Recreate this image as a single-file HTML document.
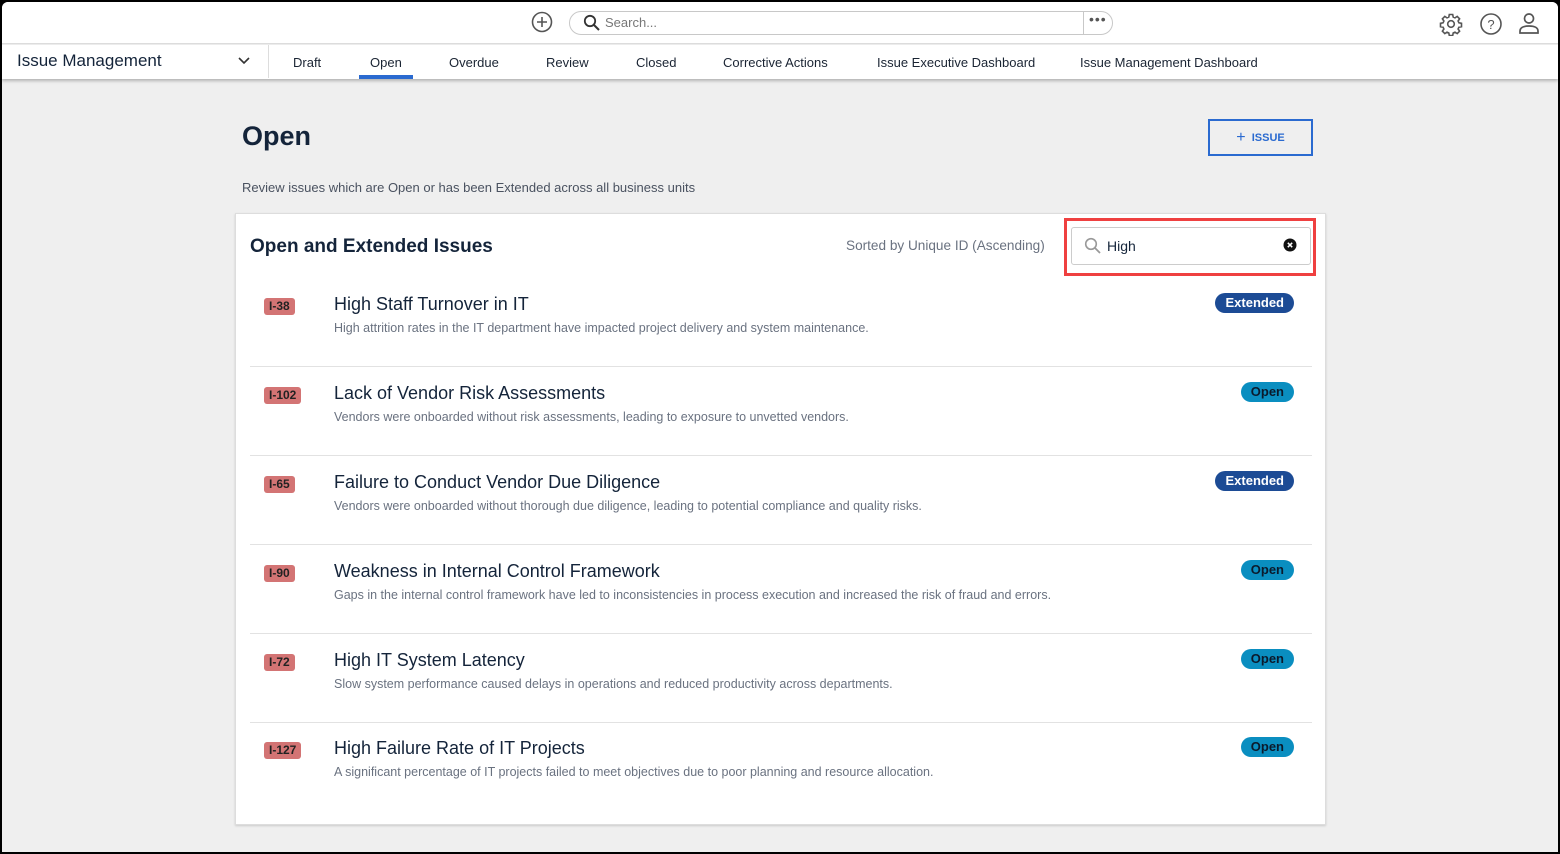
<!DOCTYPE html>
<html><head><meta charset="utf-8"><style>
*{box-sizing:border-box;margin:0;padding:0}
body{width:1560px;height:854px;background:#000;font-family:"Liberation Sans",sans-serif;overflow:hidden}
#app{position:absolute;left:2px;top:2px;width:1556px;height:850px;background:#efefef;border-radius:6px 6px 0 0;overflow:hidden}
#top{position:absolute;left:0;top:0;width:100%;height:42px;background:#fff;border-bottom:1px solid #dcdcdc}
#nav{position:absolute;left:0;top:43px;width:100%;height:34px;background:#fff;box-shadow:0 2px 3px rgba(0,0,0,.25)}
.t{position:absolute;white-space:nowrap}
.navi{position:absolute;top:10px;font-size:13px;color:#1a2433}
#card{position:absolute;left:233px;top:211px;width:1091px;height:612px;background:#fff;border:1px solid #ddd;box-shadow:0 1px 2px rgba(0,0,0,.15)}
.row{position:absolute;left:14px;width:1062px;height:89px}
.sep{border-bottom:1px solid #e2e2e2}
.id{position:absolute;left:14px;top:20px;height:17px;padding:0 5px;background:#d37474;border-radius:3px;font-size:12px;font-weight:bold;color:#222;line-height:17px}
.tt{position:absolute;left:84px;top:16px;font-size:18px;color:#14243a}
.ds{position:absolute;left:84px;top:43px;font-size:12.5px;color:#6a7280}
.bd{position:absolute;right:18px;top:15px;height:20px;border-radius:10px;padding:0 10px;font-size:13px;font-weight:bold;line-height:20px}
.ex{background:#1c4b95;color:#fff}
.op{background:#0a8ec0;color:#0b1a2c}
</style></head><body><div id="app">
<div id="top">
 <svg class="t" style="left:529px;top:9px" width="22" height="22" viewBox="0 0 22 22"><circle cx="11" cy="11" r="9.5" fill="none" stroke="#555" stroke-width="1.6"/><path d="M11 6v10M6 11h10" stroke="#555" stroke-width="1.6"/></svg>
 <div class="t" style="left:567px;top:9px;width:544px;height:24px;border:1px solid #c8c8c8;border-radius:12px"></div>
 <div class="t" style="left:1081px;top:10px;width:1px;height:22px;background:#c8c8c8"></div>
 <svg class="t" style="left:581px;top:12px" width="18" height="18" viewBox="0 0 18 18"><circle cx="7" cy="7" r="5.2" fill="none" stroke="#333" stroke-width="1.8"/><path d="M11 11l5 5" stroke="#333" stroke-width="2"/></svg>
 <div class="t" style="left:603px;top:13px;font-size:13px;color:#777">Search...</div>
 <div class="t" style="left:1087px;top:9px;font-size:14px;color:#555;letter-spacing:1px">•••</div>
 <svg class="t" style="left:1437px;top:10px" width="24" height="24" viewBox="0 0 24 24" fill="none" stroke="#555" stroke-width="1.6"><path d="M10.3 2.5h3.4l.5 2.6 1.8.8 2.2-1.5 2.4 2.4-1.5 2.2.8 1.8 2.6.5v3.4l-2.6.5-.8 1.8 1.5 2.2-2.4 2.4-2.2-1.5-1.8.8-.5 2.6h-3.4l-.5-2.6-1.8-.8-2.2 1.5-2.4-2.4 1.5-2.2-.8-1.8-2.6-.5v-3.4l2.6-.5.8-1.8-1.5-2.2 2.4-2.4 2.2 1.5 1.8-.8z"/><circle cx="12" cy="12" r="3.3"/></svg>
 <svg class="t" style="left:1477px;top:10px" width="24" height="24" viewBox="0 0 24 24"><circle cx="12" cy="12" r="10" fill="none" stroke="#555" stroke-width="1.6"/><text x="12" y="17" text-anchor="middle" font-size="13" font-family="Liberation Sans" fill="#555">?</text></svg>
 <svg class="t" style="left:1515px;top:9px" width="24" height="24" viewBox="0 0 24 24" fill="none" stroke="#555" stroke-width="1.7"><circle cx="12" cy="7.5" r="4.5"/><path d="M3 22v-2c0-3 3-5 9-5s9 2 9 5v2z"/></svg>
</div>
<div id="nav">
 <div class="t" style="left:15px;top:6px;font-size:17px;color:#14243a">Issue Management</div>
 <svg class="t" style="left:235px;top:11px" width="14" height="10" viewBox="0 0 14 10"><path d="M2 2l5 5 5-5" fill="none" stroke="#333" stroke-width="1.6"/></svg>
 <div class="t" style="left:266px;top:0;width:1px;height:33px;background:#ddd"></div>
 <div class="navi" style="left:291px">Draft</div>
 <div class="navi" style="left:368px">Open</div>
 <div class="t" style="left:357px;top:30px;width:54px;height:4px;background:#2a6ad0"></div>
 <div class="navi" style="left:447px">Overdue</div>
 <div class="navi" style="left:544px">Review</div>
 <div class="navi" style="left:634px">Closed</div>
 <div class="navi" style="left:721px">Corrective Actions</div>
 <div class="navi" style="left:875px">Issue Executive Dashboard</div>
 <div class="navi" style="left:1078px">Issue Management Dashboard</div>
</div>
<div class="t" style="left:240px;top:119px;font-size:27px;font-weight:bold;color:#14243a">Open</div>
<div class="t" style="left:1206px;top:117px;width:105px;height:37px;border:2px solid #2a6ad0;color:#2a6ad0;font-size:11px;font-weight:bold;text-align:center;line-height:33px"><span style="font-size:16px;font-weight:normal;vertical-align:-1px">+</span>&nbsp; ISSUE</div>
<div class="t" style="left:240px;top:178px;font-size:13px;color:#4a5260">Review issues which are Open or has been Extended across all business units</div>
<div id="card">
 <div class="t" style="left:14px;top:22px;font-size:19px;font-weight:bold;color:#14243a">Open and Extended Issues</div>
 <div class="t" style="left:610px;top:24px;font-size:13.6px;color:#6a7280">Sorted by Unique ID (Ascending)</div>
 <div class="t" style="left:828px;top:4px;width:252px;height:58px;border:3px solid #ef4040"></div>
 <div class="t" style="left:835px;top:13px;width:240px;height:38px;border:1px solid #ccc;border-radius:3px"></div>
 <svg class="t" style="left:848px;top:23px" width="18" height="18" viewBox="0 0 18 18"><circle cx="7" cy="7" r="5.3" fill="none" stroke="#999" stroke-width="1.6"/><path d="M11 11l5 5" stroke="#999" stroke-width="1.8"/></svg>
 <div class="t" style="left:871px;top:24px;font-size:14px;color:#14243a">High</div>
 <svg class="t" style="left:1047px;top:24px" width="14" height="14" viewBox="0 0 14 14"><circle cx="7" cy="7" r="6.5" fill="#111"/><path d="M4.8 4.8l4.4 4.4M9.2 4.8l-4.4 4.4" stroke="#fff" stroke-width="1.5"/></svg>

 <div class="row sep" style="top:64px"><div class="id">I-38</div><div class="tt">High Staff Turnover in IT</div><div class="ds">High attrition rates in the IT department have impacted project delivery and system maintenance.</div><div class="bd ex">Extended</div></div>
 <div class="row sep" style="top:153px"><div class="id">I-102</div><div class="tt">Lack of Vendor Risk Assessments</div><div class="ds">Vendors were onboarded without risk assessments, leading to exposure to unvetted vendors.</div><div class="bd op">Open</div></div>
 <div class="row sep" style="top:242px"><div class="id">I-65</div><div class="tt">Failure to Conduct Vendor Due Diligence</div><div class="ds">Vendors were onboarded without thorough due diligence, leading to potential compliance and quality risks.</div><div class="bd ex">Extended</div></div>
 <div class="row sep" style="top:331px"><div class="id">I-90</div><div class="tt">Weakness in Internal Control Framework</div><div class="ds">Gaps in the internal control framework have led to inconsistencies in process execution and increased the risk of fraud and errors.</div><div class="bd op">Open</div></div>
 <div class="row sep" style="top:420px"><div class="id">I-72</div><div class="tt">High IT System Latency</div><div class="ds">Slow system performance caused delays in operations and reduced productivity across departments.</div><div class="bd op">Open</div></div>
 <div class="row" style="top:508px"><div class="id">I-127</div><div class="tt">High Failure Rate of IT Projects</div><div class="ds">A significant percentage of IT projects failed to meet objectives due to poor planning and resource allocation.</div><div class="bd op">Open</div></div>
</div>
</div></body></html>
